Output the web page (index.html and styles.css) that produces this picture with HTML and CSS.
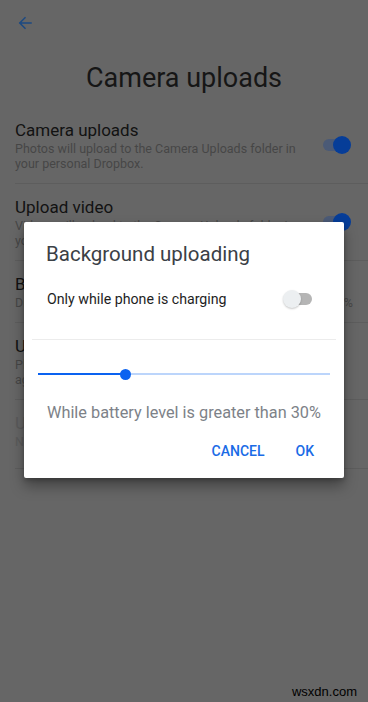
FILE: index.html
```html
<!DOCTYPE html>
<html lang="en">
<head>
<meta charset="utf-8">
<title>Camera uploads</title>
<link rel="stylesheet" href="styles.css">
</head>
<body>
<div class="screen">
  <header class="topbar">
    <svg class="back" width="18" height="18" viewBox="0 0 24 24" aria-hidden="true">
      <path d="M20 12H5M12 5l-7 7 7 7" fill="none" stroke="currentColor" stroke-width="2" stroke-linecap="square"/>
    </svg>
  </header>
  <h1 class="page-title">Camera uploads</h1>
  <ul class="settings">
    <li class="row">
      <div class="row-text">
        <div class="row-title">Camera uploads</div>
        <div class="row-sub">Photos will upload to the Camera Uploads folder in your personal Dropbox.</div>
      </div>
      <span class="switch switch-on"><span class="switch-track"></span><span class="switch-thumb"></span></span>
    </li>
    <li class="row">
      <div class="row-text">
        <div class="row-title">Upload video</div>
        <div class="row-sub">Videos will upload to the Camera Uploads folder in your personal Dropbox.</div>
      </div>
      <span class="switch switch-on"><span class="switch-track"></span><span class="switch-thumb"></span></span>
    </li>
    <li class="row">
      <div class="row-text">
        <div class="row-title">Background uploading</div>
        <div class="row-sub row-sub-value"><span>Dropbox uploads while battery is above</span><span>30%</span></div>
      </div>
    </li>
    <li class="row">
      <div class="row-text">
        <div class="row-title">Use cellular data</div>
        <div class="row-sub">Please note that uploading over cellular data may count against your data plan.</div>
      </div>
    </li>
    <li class="row row-disabled">
      <div class="row-text">
        <div class="row-title">Upload HEIC photos as</div>
        <div class="row-sub">Not available</div>
      </div>
    </li>
  </ul>

  <div class="dialog" role="dialog">
    <h2 class="dialog-title">Background uploading</h2>
    <div class="dialog-option">
      <span>Only while phone is charging</span>
      <span class="dswitch"><span class="dswitch-track"></span><span class="dswitch-thumb"></span></span>
    </div>
    <div class="dialog-divider"></div>
    <div class="slider">
      <span class="slider-fill" style="width: 30%"></span>
      <span class="slider-thumb"></span>
      <span class="slider-rest"></span>
    </div>
    <p class="dialog-note">While battery level is greater than 30%</p>
    <div class="dialog-actions">
      <button class="dbtn">CANCEL</button>
      <button class="dbtn">OK</button>
    </div>
  </div>

  <div class="watermark">wsxdn.com</div>
</div>
</body>
</html>
```

FILE: styles.css
```css
* { box-sizing: border-box; }
html, body { margin: 0; padding: 0; }
body {
  width: 368px;
  height: 702px;
  overflow: hidden;
  background: #666666;
  font-family: Roboto, "Noto Sans", sans-serif;
}
.screen {
  position: relative;
  width: 368px;
  height: 702px;
}
.topbar {
  height: 46px;
  padding-left: 16px;
  display: flex;
  align-items: center;
}
.back { color: #1d4a82; display: block; }
.page-title {
  margin: 14px 0 11px;
  font-size: 27px;
  line-height: 36px;
  font-weight: 400;
  text-align: center;
  color: #161616;
}
.settings {
  list-style: none;
  margin: 0;
  padding: 0 0 0 15px;
}
.row {
  display: flex;
  align-items: center;
  padding: 12px 15px 12px 0;
  border-bottom: 1px solid #5d5d5d;
}
.row-text { flex: 1; min-width: 0; }
.row-title {
  font-size: 17px;
  line-height: 22px;
  color: #121212;
}
.row-sub {
  font-size: 12.5px;
  line-height: 15px;
  color: #464646;
}
.row-sub-value {
  display: flex;
  justify-content: space-between;
}
.row-disabled { padding-bottom: 19px; }
.row-disabled .row-title, .row-disabled .row-sub { color: #5a5a5a; }

.switch {
  position: relative;
  flex: none;
  width: 30px;
  height: 18px;
  margin-left: 12px;
}
.switch-track {
  position: absolute;
  left: 0; top: 3px;
  width: 22px; height: 12px;
  border-radius: 6px;
  background: #4b5a76;
}
.switch-thumb {
  position: absolute;
  right: 2px; top: 0;
  width: 18px; height: 18px;
  border-radius: 50%;
  background: #063d98;
}

.dialog {
  position: absolute;
  left: 24px;
  top: 222px;
  width: 320px;
  height: 256px;
  background: #ffffff;
  border-radius: 2px;
  box-shadow: 0 8px 14px rgba(0,0,0,0.35), 0 2px 4px rgba(0,0,0,0.2);
}
.dialog-title {
  margin: 0;
  padding: 18px 22px 0;
  font-size: 20.5px;
  line-height: 28px;
  font-weight: 400;
  color: #3b4046;
}
.dialog-option {
  margin-top: 13px;
  height: 36px;
  padding: 0 32px 0 23px;
  display: flex;
  align-items: center;
  justify-content: space-between;
  font-size: 14.2px;
  color: #1e1e1e;
}
.dswitch {
  position: relative;
  width: 29px;
  height: 18px;
}
.dswitch-track {
  position: absolute;
  left: 7px; top: 3px;
  width: 22px; height: 12px;
  border-radius: 6px;
  background: #b5b5b5;
}
.dswitch-thumb {
  position: absolute;
  left: 0; top: 0;
  width: 18px; height: 18px;
  border-radius: 50%;
  background: #eceff1;
  box-shadow: 0 1px 2px rgba(0,0,0,0.22);
}
.dialog-divider {
  margin: 22px 8px 0;
  height: 1px;
  background: #ececec;
}
.slider {
  margin: 28px 14px 0;
  height: 12px;
  display: flex;
  align-items: center;
}
.slider-fill {
  height: 2px;
  background: #0a62f0;
}
.slider-thumb {
  flex: none;
  width: 11px;
  height: 11px;
  margin: 0 -5.5px;
  border-radius: 50%;
  background: #0a62f0;
  position: relative;
}
.slider-rest {
  flex: 1;
  height: 1.5px;
  background: #bcd5fb;
}
.dialog-note {
  margin: 22px 0 0;
  padding-left: 23px;
  font-size: 16.3px;
  line-height: 22px;
  color: #7d8288;
}
.dialog-actions {
  margin-top: 9px;
  height: 36px;
  padding-right: 22px;
  display: flex;
  justify-content: flex-end;
  align-items: center;
  gap: 15px;
}
.dbtn {
  border: 0;
  background: none;
  padding: 0 8px;
  height: 36px;
  font-family: Roboto, "Noto Sans", sans-serif;
  font-size: 14px;
  font-weight: 500;
  color: #1a6be6;
}
.watermark {
  position: absolute;
  right: 11px;
  bottom: 2px;
  font-family: "Liberation Sans", Arial, sans-serif;
  font-size: 13px;
  line-height: 16px;
  color: #000;
}
```
